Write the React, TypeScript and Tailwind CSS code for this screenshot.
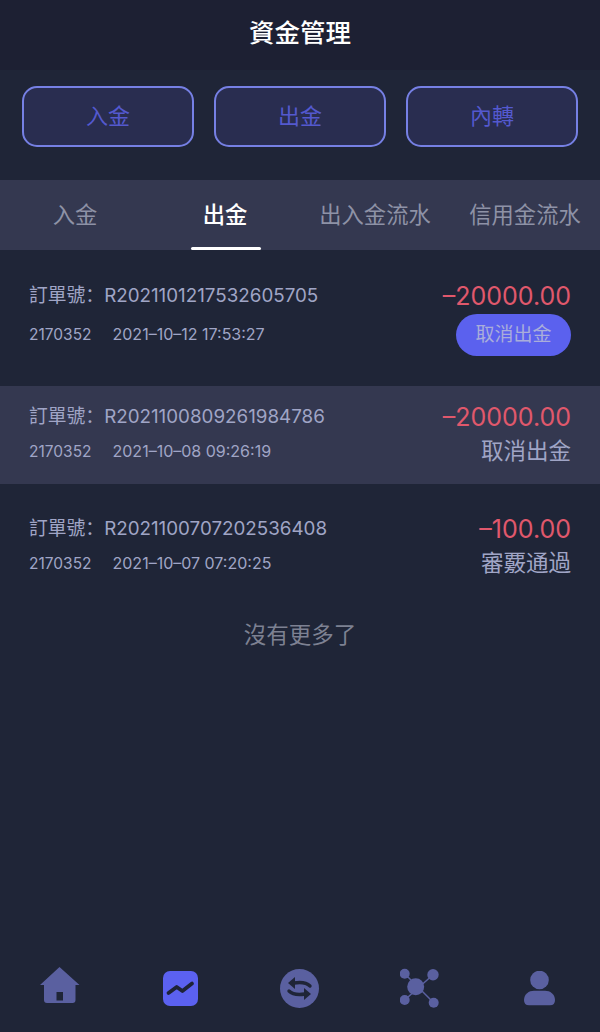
const sans = "font-['Inter','Liberation_Sans','Noto_Sans_CJK_SC',sans-serif]";

const orders = [
  {
    no: "R2021101217532605705",
    id: "2170352",
    time: "2021–10–12 17:53:27",
    amount: "–20000.00",
    status: "取消出金",
    action: true,
    row: "h-[136px] pt-[29px]",
    gap: "mt-[9px]",
  },
  {
    no: "R2021100809261984786",
    id: "2170352",
    time: "2021–10–08 09:26:19",
    amount: "–20000.00",
    status: "取消出金",
    row: "h-[98px] pt-[14px] bg-[#343850]",
    gap: "mt-[5px]",
  },
  {
    no: "R2021100707202536408",
    id: "2170352",
    time: "2021–10–07 07:20:25",
    amount: "–100.00",
    status: "審覈通過",
    row: "h-[98px] pt-[28px]",
    gap: "mt-[5px]",
  },
];

const HomeIcon = () => (
  <svg width="40" height="38" viewBox="0 0 40 38" fill="#5a60a0">
    <path d="M19.5 0 L39.5 18 L35.5 18 L35.5 33 Q35.5 36 32.5 36 L7 36 Q4 36 4 33 L4 18 L0 18 Z" />
    <rect x="16.5" y="25" width="6.5" height="8.5" fill="#1f2537" />
  </svg>
);

const ChartIcon = () => (
  <svg width="35" height="35" viewBox="0 0 35 35">
    <rect width="35" height="35" rx="7" fill="#5b61f0" />
    <path d="M5.5 22 L13.7 16 L19.4 20 L29 12.6" fill="none" stroke="#1e2336" strokeWidth="3.8" strokeLinecap="round" strokeLinejoin="round" />
  </svg>
);

const SwapIcon = () => (
  <svg width="40" height="40" viewBox="0 0 40 40">
    <circle cx="19.5" cy="19.5" r="19.5" fill="#5a60a0" />
    <path d="M8 14 L15 8 L15 20 Z" fill="#1f2537" />
    <path d="M14 14 C20 13 26 13 30 17" fill="none" stroke="#1f2537" strokeWidth="3.4" strokeLinecap="round" />
    <path d="M31 25 L24 19 L24 31 Z" fill="#1f2537" />
    <path d="M25 25 C19 26 13 26 9 22" fill="none" stroke="#1f2537" strokeWidth="3.4" strokeLinecap="round" />
  </svg>
);

const NodesIcon = () => (
  <svg width="40" height="40" viewBox="0 0 40 40" fill="#5a60a0">
    <path d="M4.7 5.7 L33.7 34.7 M4.7 32 L33 6.7" stroke="#5a60a0" strokeWidth="1.5" />
    <circle cx="4.7" cy="5.7" r="5" />
    <circle cx="33" cy="6.7" r="5.7" />
    <circle cx="4.7" cy="32" r="5" />
    <circle cx="33.7" cy="34.7" r="5" />
    <circle cx="15.7" cy="18.7" r="8.5" />
  </svg>
);

const UserIcon = () => (
  <svg width="32" height="36" viewBox="0 0 32 36" fill="#5a60a0">
    <circle cx="15.5" cy="9" r="9.3" />
    <path d="M0 29 C0 23 5 19.7 10 19.7 L21 19.7 C26 19.7 31 23 31 29 Q31 34.3 26 34.3 L5 34.3 Q0 34.3 0 29 Z" />
  </svg>
);

export default function App() {
  return (
    <div className={`h-[1032px] w-[600px] overflow-hidden bg-[#1f2537] flex flex-col ${sans}`}>
      <header className="h-[70px] bg-[#1d2033] flex items-center justify-center shrink-0">
        <h1 className="text-[25.5px] font-medium text-white pb-[3px]">資金管理</h1>
      </header>

      <div className="h-[110px] shrink-0 flex gap-[20px] px-[22px] pt-[16px]">
        {["入金", "出金", "內轉"].map((t) => (
          <button
            key={t}
            className="flex-1 h-[61px] rounded-[15px] border-2 border-[#7680e4] bg-[#292d50] text-[22px] text-[#5459cf] flex items-center justify-center"
          >
            {t}
          </button>
        ))}
      </div>

      <nav className="h-[70px] shrink-0 bg-[#343850] flex text-[22.3px] text-[#8e92a6] relative">
        <span className="w-[150px] flex items-center justify-center">入金</span>
        <span className="w-[150px] flex items-center justify-center font-medium text-white">出金</span>
        <span className="w-[150px] flex items-center justify-center">出入金流水</span>
        <span className="w-[150px] flex items-center justify-center">信用金流水</span>
        <span className="absolute left-[191px] bottom-0 w-[70px] h-[3px] rounded-full bg-white" />
      </nav>

      <ul>
        {orders.map((o) => (
          <li key={o.no} className={`px-[29px] flex justify-between ${o.row}`}>
            <div className="text-[#a0a5c6]">
              <p className="text-[18.8px] leading-[34px] whitespace-nowrap">訂單號：{o.no}</p>
              <p className={`text-[15.5px] leading-[24px] whitespace-nowrap ${o.gap}`}>
                {o.id}
                <span className="ml-[21px] text-[16px]">{o.time}</span>
              </p>
            </div>
            <div className="flex flex-col items-end">
              <p className="text-[25px] leading-[34px] text-[#e0586c]">{o.amount}</p>
              {o.action ? (
                <button className="mt-[1px] w-[115px] h-[42px] rounded-full bg-[#5b61ee] text-[19px] text-[#a9adda]">
                  {o.status}
                </button>
              ) : (
                <p className="text-[22.5px] leading-[34px] text-[#a0a5c6]">{o.status}</p>
              )}
            </div>
          </li>
        ))}
      </ul>

      <p className="text-center text-[22.5px] leading-[30px] text-[#7d8192] mt-[38px]">沒有更多了</p>

      <footer className="mt-auto h-[88px] shrink-0 flex items-start pt-[23px]">
        <span className="w-[120px] flex justify-center"><HomeIcon /></span>
        <span className="w-[120px] flex justify-center mt-[4px]"><ChartIcon /></span>
        <span className="w-[120px] flex justify-center mt-[2px]"><SwapIcon /></span>
        <span className="w-[120px] flex justify-center mt-[1px]"><NodesIcon /></span>
        <span className="w-[120px] flex justify-center mt-[4px]"><UserIcon /></span>
      </footer>
    </div>
  );
}
